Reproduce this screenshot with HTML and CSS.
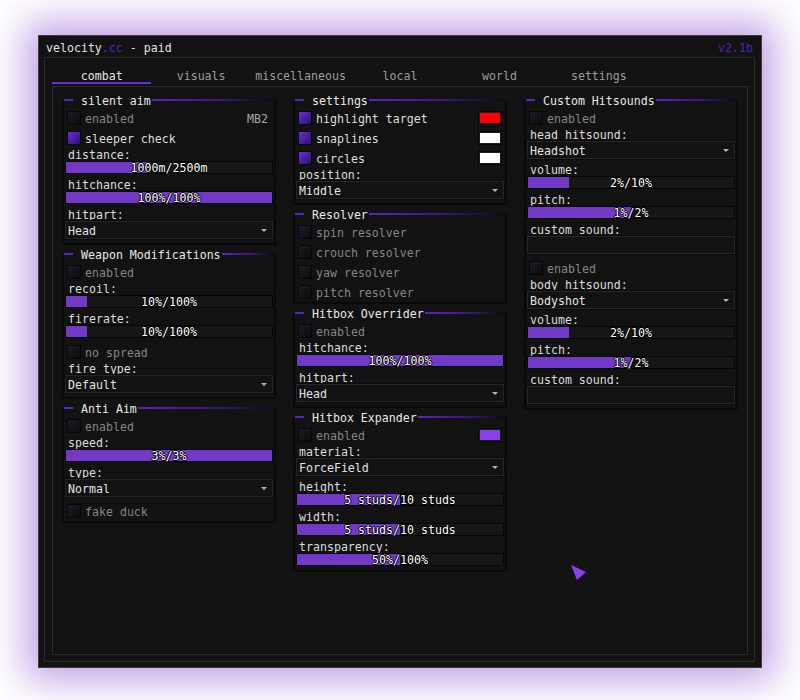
FILE: index.html
```html
<!DOCTYPE html>
<html>
<head>
<meta charset="utf-8">
<link rel="stylesheet" href="styles.css">
</head>
<body>
<div class="window">
  <div class="titlebar">
    <span>velocity<span class="accent">.cc</span> - paid</span>
    <span class="accent">v2.1b</span>
  </div>
  <div class="frame">
    <div class="tabs">
      <div class="tab active">combat</div>
      <div class="tab">visuals</div>
      <div class="tab">miscellaneous</div>
      <div class="tab">local</div>
      <div class="tab">world</div>
      <div class="tab">settings</div>
    </div>
    <div class="content">
      <div class="col">
        <section class="sec">
          <div class="sec-head"><span class="l1"></span><span class="sec-title">silent aim</span><span class="l2"></span></div>
          <div class="row"><span class="cb"></span><span class="txt off">enabled</span><span class="key">MB2</span></div>
          <div class="row"><span class="cb on"></span><span class="txt">sleeper check</span></div>
          <div class="label">distance:</div>
          <div class="slider" style="--p:40%"><span class="val">1000m/2500m</span></div>
          <div class="label">hitchance:</div>
          <div class="slider" style="--p:100%"><span class="val">100%/100%</span></div>
          <div class="label">hitpart:</div>
          <div class="dropdown"><span class="dd-text">Head</span><span class="arrow"></span></div>
        </section>
        <section class="sec">
          <div class="sec-head"><span class="l1"></span><span class="sec-title">Weapon Modifications</span><span class="l2"></span></div>
          <div class="row"><span class="cb"></span><span class="txt off">enabled</span></div>
          <div class="label">recoil:</div>
          <div class="slider" style="--p:10%"><span class="val">10%/100%</span></div>
          <div class="label">firerate:</div>
          <div class="slider" style="--p:10%"><span class="val">10%/100%</span></div>
          <div class="row"><span class="cb"></span><span class="txt off">no spread</span></div>
          <div class="label">fire type:</div>
          <div class="dropdown"><span class="dd-text">Default</span><span class="arrow"></span></div>
        </section>
        <section class="sec">
          <div class="sec-head"><span class="l1"></span><span class="sec-title">Anti Aim</span><span class="l2"></span></div>
          <div class="row"><span class="cb"></span><span class="txt off">enabled</span></div>
          <div class="label">speed:</div>
          <div class="slider" style="--p:100%"><span class="val">3%/3%</span></div>
          <div class="label">type:</div>
          <div class="dropdown"><span class="dd-text">Normal</span><span class="arrow"></span></div>
          <div class="row"><span class="cb"></span><span class="txt off">fake duck</span></div>
        </section>
      </div>

      <div class="col">
        <section class="sec">
          <div class="sec-head"><span class="l1"></span><span class="sec-title">settings</span><span class="l2"></span></div>
          <div class="row"><span class="cb on"></span><span class="txt">highlight target</span><span class="swatch red"></span></div>
          <div class="row"><span class="cb on"></span><span class="txt">snaplines</span><span class="swatch white"></span></div>
          <div class="row"><span class="cb on"></span><span class="txt">circles</span><span class="swatch white"></span></div>
          <div class="label">position:</div>
          <div class="dropdown"><span class="dd-text">Middle</span><span class="arrow"></span></div>
        </section>
        <section class="sec">
          <div class="sec-head"><span class="l1"></span><span class="sec-title">Resolver</span><span class="l2"></span></div>
          <div class="row"><span class="cb"></span><span class="txt off">spin resolver</span></div>
          <div class="row"><span class="cb"></span><span class="txt off">crouch resolver</span></div>
          <div class="row"><span class="cb"></span><span class="txt off">yaw resolver</span></div>
          <div class="row"><span class="cb"></span><span class="txt off">pitch resolver</span></div>
        </section>
        <section class="sec">
          <div class="sec-head"><span class="l1"></span><span class="sec-title">Hitbox Overrider</span><span class="l2"></span></div>
          <div class="row"><span class="cb"></span><span class="txt off">enabled</span></div>
          <div class="label">hitchance:</div>
          <div class="slider" style="--p:100%"><span class="val">100%/100%</span></div>
          <div class="label">hitpart:</div>
          <div class="dropdown"><span class="dd-text">Head</span><span class="arrow"></span></div>
        </section>
        <section class="sec">
          <div class="sec-head"><span class="l1"></span><span class="sec-title">Hitbox Expander</span><span class="l2"></span></div>
          <div class="row"><span class="cb"></span><span class="txt off">enabled</span><span class="swatch purple"></span></div>
          <div class="label">material:</div>
          <div class="dropdown"><span class="dd-text">ForceField</span><span class="arrow"></span></div>
          <div class="label">height:</div>
          <div class="slider" style="--p:50%"><span class="val">5 studs/10 studs</span></div>
          <div class="label">width:</div>
          <div class="slider" style="--p:50%"><span class="val">5 studs/10 studs</span></div>
          <div class="label">transparency:</div>
          <div class="slider" style="--p:50%"><span class="val">50%/100%</span></div>
        </section>
      </div>

      <div class="col">
        <section class="sec">
          <div class="sec-head"><span class="l1"></span><span class="sec-title">Custom Hitsounds</span><span class="l2"></span></div>
          <div class="row"><span class="cb"></span><span class="txt off">enabled</span></div>
          <div class="label">head hitsound:</div>
          <div class="dropdown"><span class="dd-text">Headshot</span><span class="arrow"></span></div>
          <div class="label">volume:</div>
          <div class="slider" style="--p:20%"><span class="val">2%/10%</span></div>
          <div class="label">pitch:</div>
          <div class="slider" style="--p:50%"><span class="val">1%/2%</span></div>
          <div class="label">custom sound:</div>
          <div class="input"></div>
          <div class="row"><span class="cb"></span><span class="txt off">enabled</span></div>
          <div class="label">body hitsound:</div>
          <div class="dropdown"><span class="dd-text">Bodyshot</span><span class="arrow"></span></div>
          <div class="label">volume:</div>
          <div class="slider" style="--p:20%"><span class="val">2%/10%</span></div>
          <div class="label">pitch:</div>
          <div class="slider" style="--p:50%"><span class="val">1%/2%</span></div>
          <div class="label">custom sound:</div>
          <div class="input"></div>
        </section>
      </div>
    </div>
  </div>
  <svg class="cursor" width="16" height="16" viewBox="0 0 16 16"><polygon points="0,0 15,7 6,15" fill="#8a3ff0"/></svg>
</div>
</body>
</html>
```

FILE: styles.css
```css
* { box-sizing: border-box; }
html, body { margin: 0; padding: 0; background: #ffffff; }
body {
  width: 800px;
  height: 700px;
  padding: 35px 0 0 38px;
  font-family: "DejaVu Sans Mono", "Liberation Mono", monospace;
  font-size: 11.6px;
  color: #dcdcdc;
}
.window {
  position: relative;
  width: 724px;
  height: 633px;
  background: #121212;
  border: 1px solid #3a3a3a;
  box-shadow: 0 0 36px 12px rgba(140, 80, 210, 0.55);
  display: flex;
  flex-direction: column;
}
.titlebar {
  height: 21px;
  padding: 4px 8px 0 7px;
  line-height: 17px;
  display: flex;
  justify-content: space-between;
  color: #e2e2e2;
  white-space: pre;
}
.accent { color: #5420bd; }
.frame {
  flex: 1;
  margin: 0 6px 5px 5px;
  border: 1px solid #2a2a2a;
  padding: 0 6px 6px 7px;
  display: flex;
  flex-direction: column;
}
.tabs {
  height: 28px;
  display: grid;
  grid-template-columns: repeat(7, 1fr);
  align-items: start;
}
.tab {
  height: 26px;
  padding-top: 11px;
  line-height: 14px;
  text-align: center;
  color: #9c9c9c;
  border-bottom: 2px solid transparent;
}
.tab.active {
  color: #e6e6e6;
  border-bottom-color: #6a2fd6;
}
.content {
  flex: 1;
  border: 1px solid #2a2a2a;
  padding: 13px 0 0 9px;
  display: grid;
  grid-template-columns: repeat(3, 214px);
  column-gap: 17px;
  align-items: start;
}
.col {
  display: flex;
  flex-direction: column;
  gap: 9px;
}
.sec {
  display: flex;
  flex-direction: column;
  border: 2px solid #090909;
  border-top: 0;
  padding: 0 1px;
}
.sec-head {
  display: flex;
  align-items: center;
  height: 14px;
  margin: -7px -1px 1px;
}
.l1 { width: 9px; height: 2px; background: #5a22c8; flex: none; }
.l2 { flex: 1; height: 2px; background: linear-gradient(90deg, #5a22c8 0%, #3a1680 55%, #0c0816 100%); }
.sec-title {
  padding: 2px 1px 0 8px;
  line-height: 14px;
  color: #e8e8e8;
  white-space: nowrap;
}
.row {
  display: flex;
  align-items: center;
  height: 20px;
  line-height: 20px;
  padding-left: 2px;
  white-space: nowrap;
}
.cb {
  width: 14px;
  height: 14px;
  flex: none;
  margin-right: 4px;
  border: 1px solid #060606;
  background: linear-gradient(135deg, #1f1a2a, #0a0a0c);
}
.cb.on { background: linear-gradient(135deg, #6a30e0, #2a1068); }
.txt, .key { padding-top: 2px; }
.txt { color: #dedede; }
.txt.off { color: #858585; }
.key { margin-left: auto; padding-right: 5px; color: #a8a8a8; }
.swatch {
  margin-left: auto;
  margin-right: 2px;
  width: 24px;
  height: 14px;
  border: 1px solid #050505;
  box-shadow: inset 0 0 0 1px #1e1e1e;
}
.swatch.red { background: #ff0000; }
.swatch.white { background: #ffffff; }
.swatch.purple { background: #8a3fe6; }
.label {
  height: 13px;
  padding: 2px 0 0 3px;
  line-height: 11px;
  color: #dcdcdc;
  white-space: nowrap;
}
.slider {
  height: 13px;
  margin-bottom: 4px;
  border: 1px solid #050505;
  background: linear-gradient(90deg, #7139c6 var(--p), #161616 var(--p));
  text-align: center;
  line-height: 13px;
}
.val {
  color: #ffffff;
  text-shadow: 1px 0 #000, -1px 0 #000, 0 1px #000, 0 -1px #000;
  white-space: pre;
}
.dropdown {
  height: 18px;
  margin-bottom: 4px;
  border: 1px solid #262626;
  box-shadow: 0 0 0 1px #0a0a0a;
  display: flex;
  align-items: center;
  justify-content: space-between;
  padding: 0 5px 0 2px;
  line-height: 16px;
  color: #e2e2e2;
}
.dd-text { padding-top: 2px; }
.arrow {
  width: 0;
  height: 0;
  border-left: 3px solid transparent;
  border-right: 3px solid transparent;
  border-top: 3px solid #b4b4b4;
}
.input {
  height: 18px;
  margin-bottom: 4px;
  border: 1px solid #262626;
  box-shadow: 0 0 0 1px #0a0a0a;
}
.cursor {
  position: absolute;
  left: 532px;
  top: 529px;
}
```
